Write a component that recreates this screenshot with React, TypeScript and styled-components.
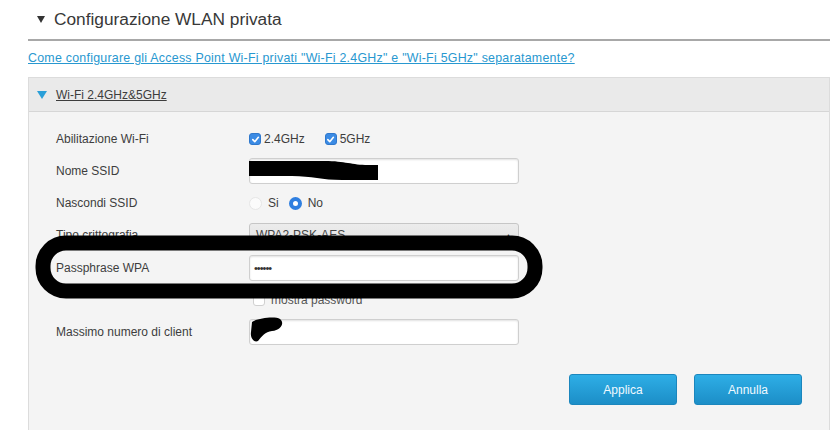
import React from 'react';
import styled, { createGlobalStyle } from 'styled-components';

const GlobalStyle = createGlobalStyle`
  html, body {
    margin: 0;
    padding: 0;
    background: #ffffff;
  }
  body {
    font-family: 'Liberation Sans', Arial, sans-serif;
    color: #3d3d3d;
  }
`;

const Page = styled.div`
  position: relative;
  width: 839px;
  height: 430px;
  overflow: hidden;
  padding: 0 9px 0 28px;
  box-sizing: border-box;
  background: #fff;
`;

const TitleBar = styled.div`
  display: flex;
  align-items: center;
  height: 39px;
  border-bottom: 2px solid #a8a8a8;
  padding-left: 9px;
  gap: 9px;
`;

const Caret = styled.span<{ $color?: string; $size?: number }>`
  display: inline-block;
  width: 0;
  height: 0;
  border-left: ${(p) => (p.$size ?? 10) / 2}px solid transparent;
  border-right: ${(p) => (p.$size ?? 10) / 2}px solid transparent;
  border-top: ${(p) => ((p.$size ?? 10) * 0.8).toFixed(1)}px solid ${(p) => p.$color ?? '#333'};
`;

const Title = styled.h2`
  margin: 0;
  font-size: 17.3px;
  font-weight: normal;
  color: #383838;
`;

const HelpLink = styled.a`
  display: block;
  margin-top: 10px;
  height: 26px;
  font-size: 12.4px;
  letter-spacing: 0.25px;
  color: #2898d0;
  text-decoration: underline;
  cursor: pointer;
`;

const Panel = styled.div`
  border: 1px solid #dcdcdc;
  border-bottom: none;
  height: 353px;
  display: flex;
  flex-direction: column;
`;

const PanelHeader = styled.div`
  display: flex;
  align-items: center;
  gap: 9px;
  height: 33px;
  padding-left: 8px;
  background: #eaeaea;
  border-bottom: 1px solid #d6d6d6;
`;

const PanelTitle = styled.span`
  font-size: 12px;
  color: #3d3d3d;
  text-decoration: underline;
`;

const PanelBody = styled.div`
  flex: 1;
  background: #f4f4f4;
  padding: 11px 0 0 27px;
  display: flex;
  flex-direction: column;
`;

const Row = styled.div<{ $h?: number }>`
  display: grid;
  grid-template-columns: 193px 270px;
  align-items: center;
  height: ${(p) => p.$h ?? 32}px;
`;

const Label = styled.label`
  font-size: 12px;
  color: #3d3d3d;
`;

const Options = styled.div<{ $gap?: number }>`
  display: flex;
  align-items: center;
  gap: ${(p) => p.$gap ?? 20}px;
  font-size: 12px;
  color: #3d3d3d;
`;

const Option = styled.span`
  display: flex;
  align-items: center;
  gap: 3px;
`;

const Check = styled.span<{ $on?: boolean }>`
  display: inline-flex;
  align-items: center;
  justify-content: center;
  width: 12px;
  height: 12px;
  border-radius: 3px;
  background: ${(p) => (p.$on ? '#3b8be4' : '#fff')};
  border: 1px solid ${(p) => (p.$on ? '#2f78cc' : '#d0d0d0')};
  box-sizing: border-box;
`;

const Radio = styled.span<{ $on?: boolean }>`
  display: inline-block;
  width: 13px;
  height: 13px;
  border-radius: 50%;
  box-sizing: border-box;
  background: ${(p) => (p.$on ? '#fff' : '#fbfbfb')};
  border: ${(p) => (p.$on ? '4px solid #2f7fe0' : '1px solid #e6e6e6')};
  margin-right: 3px;
`;

const TextInput = styled.div`
  height: 26px;
  background: #fff;
  border: 1px solid #cfcfcf;
  border-radius: 3px;
  box-shadow: inset 0 1px 2px rgba(0, 0, 0, 0.12);
  box-sizing: border-box;
  display: flex;
  align-items: center;
  padding-left: 4px;
  font-size: 11px;
  letter-spacing: -1px;
  color: #333;
`;

const Select = styled.div`
  height: 25px;
  background: linear-gradient(#ececec, #e0e0e0);
  border: 1px solid #c6c6c6;
  border-radius: 3px;
  box-sizing: border-box;
  display: flex;
  align-items: center;
  justify-content: space-between;
  padding: 0 6px;
  font-size: 12px;
  color: #444;
`;

const SelectArrow = styled.span`
  font-size: 7px;
  color: #333;
`;

const SmallCheckRow = styled.div`
  display: flex;
  align-items: center;
  gap: 6px;
  font-size: 12px;
  color: #555;
  padding-left: 4px;
`;

const Actions = styled.div`
  display: flex;
  justify-content: flex-end;
  gap: 17px;
  margin-top: 25px;
  padding-right: 27px;
`;

const Button = styled.button`
  width: 108px;
  height: 31px;
  border: 1px solid #1b86bd;
  border-radius: 3px;
  background: linear-gradient(#2eaee6, #1c8ec7);
  color: #f0f9ff;
  font-family: 'Liberation Sans', Arial, sans-serif;
  font-size: 12px;
  cursor: pointer;
`;

const Marks = styled.svg`
  position: absolute;
  left: 0;
  top: 0;
  pointer-events: none;
`;

const Tick = () => (
  <svg width="9" height="9" viewBox="0 0 10 10">
    <path d="M2 5.2 L4.2 7.4 L8.2 2.6" fill="none" stroke="#fff" strokeWidth="1.8" strokeLinecap="round" strokeLinejoin="round" />
  </svg>
);

export default function App() {
  return (
    <>
      <GlobalStyle />
      <Page>
        <TitleBar>
          <Caret $size={9} />
          <Title>Configurazione WLAN privata</Title>
        </TitleBar>
        <HelpLink>
          Come configurare gli Access Point Wi-Fi privati "Wi-Fi 2.4GHz" e "Wi-Fi 5GHz" separatamente?
        </HelpLink>
        <Panel>
          <PanelHeader>
            <Caret $size={11} $color="#2a9fd8" />
            <PanelTitle>Wi-Fi 2.4GHz&amp;5GHz</PanelTitle>
          </PanelHeader>
          <PanelBody>
            <Row>
              <Label>Abilitazione Wi-Fi</Label>
              <Options>
                <Option>
                  <Check $on>
                    <Tick />
                  </Check>
                  2.4GHz
                </Option>
                <Option>
                  <Check $on>
                    <Tick />
                  </Check>
                  5GHz
                </Option>
              </Options>
            </Row>
            <Row>
              <Label>Nome SSID</Label>
              <TextInput />
            </Row>
            <Row>
              <Label>Nascondi SSID</Label>
              <Options $gap={10}>
                <Option>
                  <Radio />
                  Si
                </Option>
                <Option>
                  <Radio $on />
                  No
                </Option>
              </Options>
            </Row>
            <Row>
              <Label>Tipo crittografia</Label>
              <Select>
                WPA2-PSK-AES
                <SelectArrow>▲</SelectArrow>
              </Select>
            </Row>
            <Row $h={34}>
              <Label>Passphrase WPA</Label>
              <TextInput>••••••</TextInput>
            </Row>
            <Row $h={30}>
              <span />
              <SmallCheckRow>
                <Check />
                mostra password
              </SmallCheckRow>
            </Row>
            <Row $h={34}>
              <Label>Massimo numero di client</Label>
              <TextInput />
            </Row>
            <Actions>
              <Button>Applica</Button>
              <Button>Annulla</Button>
            </Actions>
          </PanelBody>
        </Panel>
        <Marks width="839" height="430" viewBox="0 0 839 430">
          <rect x="39" y="246" width="496" height="44" rx="22" fill="none" stroke="#c0201a" strokeWidth="6" opacity="0.7" />
          <rect x="43" y="243" width="492" height="48" rx="23" fill="none" stroke="#000" strokeWidth="15" />
          <path
            d="M249 161 L325 161 C345 161 352 165 368 165 L378 165 L378 180 L342 180 C322 180 312 176 292 176 L249 176 Z"
            fill="#000"
          />
          <path
            d="M252 322 C258 318 275 316 280 319 C285 323 281 330 272 331 C265 332 262 336 258 341 C254 343 250 338 251 332 Z"
            fill="#000"
          />
        </Marks>
      </Page>
    </>
  );
}
